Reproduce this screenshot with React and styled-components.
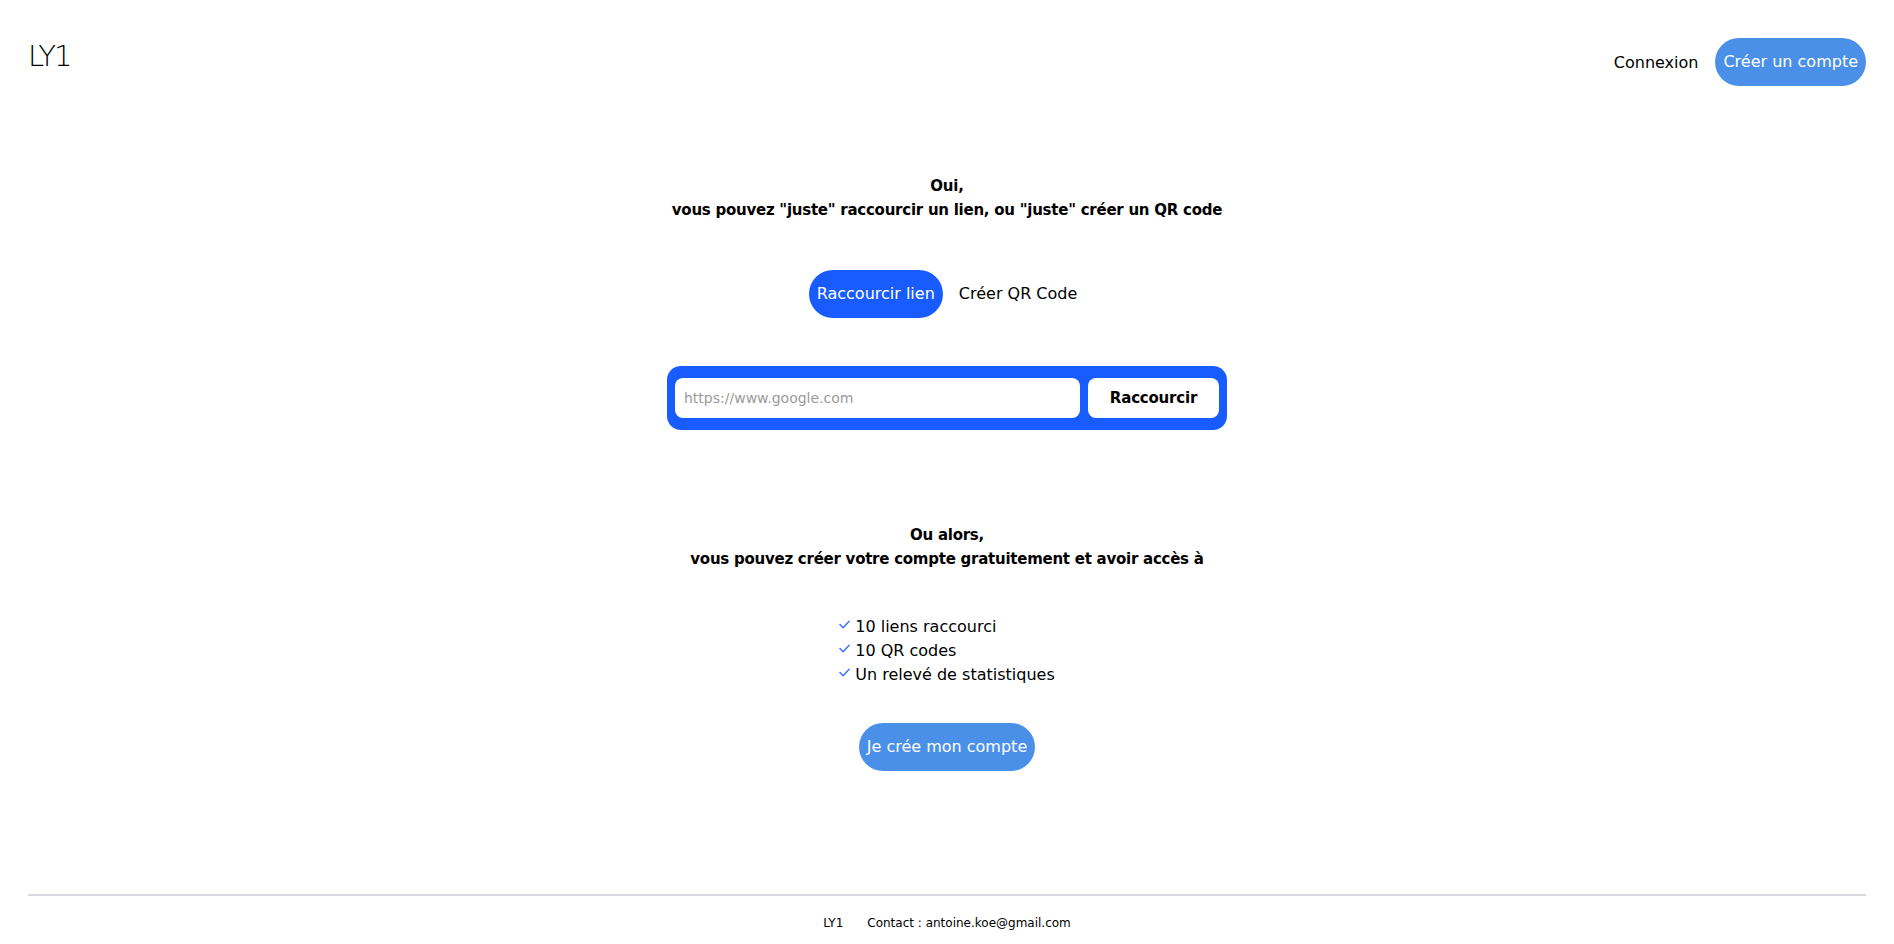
import React from "react";
import styled, { createGlobalStyle } from "styled-components";

const Global = createGlobalStyle`
  html, body { margin: 0; padding: 0; background: #fff; }
  body { font-family: "DejaVu Sans", "Noto Sans", sans-serif; color: #000; }
  * { box-sizing: border-box; }
`;

const Page = styled.div`
  min-height: 100vh;
  display: flex;
  flex-direction: column;
`;

const Header = styled.header`
  display: flex;
  justify-content: space-between;
  align-items: flex-start;
  padding: 38px 28px 0;
`;

const Logo = styled.div`
  font-size: 29px;
  font-weight: 300;
  line-height: 30px;
  margin-top: 3px;
  letter-spacing: -2px;
`;

const Nav = styled.nav`
  display: flex;
  align-items: center;
  gap: 17px;
`;

const NavLink = styled.a`
  font-size: 16px;
  color: #000;
  text-decoration: none;
`;

const PillButton = styled.button`
  border: none;
  border-radius: 999px;
  background: ${(p) => p.$bg || "#4a90e9"};
  color: #fff;
  font-family: inherit;
  font-size: 16px;
  line-height: 24px;
  padding: 12px ${(p) => p.$px || 8}px;
  cursor: pointer;
`;

const Main = styled.main`
  display: flex;
  flex-direction: column;
  align-items: center;
  padding-top: 88px;
`;

const Title = styled.h2`
  margin: 0;
  font-size: 15px;
  letter-spacing: -0.25px;
  line-height: 24px;
  font-weight: 700;
  text-align: center;
`;

const Tabs = styled.div`
  display: flex;
  gap: 8px;
  margin-top: 48px;
`;

const Tab = styled.button`
  border: none;
  border-radius: 999px;
  background: ${(p) => (p.$active ? "#185cff" : "transparent")};
  color: ${(p) => (p.$active ? "#fff" : "#000")};
  font-family: inherit;
  font-size: 16px;
  line-height: 24px;
  padding: 12px 8px;
  cursor: pointer;
`;

const Form = styled.form`
  display: flex;
  gap: 8px;
  width: 560px;
  margin-top: 48px;
  padding: 12px 8px;
  background: #185cff;
  border-radius: 14px;
`;

const Input = styled.input`
  flex: 1;
  height: 40px;
  border: none;
  border-radius: 8px;
  padding: 0 9px;
  font-family: inherit;
  font-size: 14px;
  outline: none;
  &::placeholder { color: #9a9a9a; }
`;

const SubmitButton = styled.button`
  width: 131px;
  height: 40px;
  border: none;
  border-radius: 8px;
  background: #fff;
  font-family: inherit;
  font-weight: 700;
  font-size: 15px;
  letter-spacing: -0.2px;
  color: #000;
`;

const Section = styled.section`
  display: flex;
  flex-direction: column;
  align-items: center;
  margin-top: 93px;
`;

const List = styled.ul`
  list-style: none;
  margin: 44px 0 0;
  padding: 0;
`;

const Item = styled.li`
  display: flex;
  align-items: center;
  gap: 5px;
  font-size: 16px;
  line-height: 24px;
`;

const Check = styled.svg`
  width: 11px;
  height: 11px;
  margin-top: -6px;
  flex: none;
`;

const CtaWrap = styled.div`
  margin-top: 36px;
`;

const Footer = styled.footer`
  margin: auto 28px 0;
  border-top: 2px solid #d6d8dd;
  padding: 19px 0 13px;
  display: flex;
  justify-content: center;
  gap: 24px;
  font-size: 12px;
  line-height: 16px;
  color: #000;
`;

const CheckIcon = () => (
  <Check viewBox="0 0 12 12" fill="none">
    <polyline points="1,6 4.5,9.5 11,2.5" stroke="#2f6bff" strokeWidth="1.4" strokeLinecap="round" strokeLinejoin="round" />
  </Check>
);

export default function App() {
  return (
    <Page>
      <Global />
      <Header>
        <Logo>LY1</Logo>
        <Nav>
          <NavLink href="#">Connexion</NavLink>
          <PillButton>Créer un compte</PillButton>
        </Nav>
      </Header>
      <Main>
        <Title>
          Oui,
          <br />
          vous pouvez "juste" raccourcir un lien, ou "juste" créer un QR code
        </Title>
        <Tabs>
          <Tab $active>Raccourcir lien</Tab>
          <Tab>Créer QR Code</Tab>
        </Tabs>
        <Form onSubmit={(e) => e.preventDefault()}>
          <Input placeholder="https://www.google.com" />
          <SubmitButton type="submit">Raccourcir</SubmitButton>
        </Form>
        <Section>
          <Title>
            Ou alors,
            <br />
            vous pouvez créer votre compte gratuitement et avoir accès à
          </Title>
          <List>
            <Item><CheckIcon />10 liens raccourci</Item>
            <Item><CheckIcon />10 QR codes</Item>
            <Item><CheckIcon />Un relevé de statistiques</Item>
          </List>
          <CtaWrap>
            <PillButton>Je crée mon compte</PillButton>
          </CtaWrap>
        </Section>
      </Main>
      <Footer>
        <span>LY1</span>
        <span>Contact : antoine.koe@gmail.com</span>
      </Footer>
    </Page>
  );
}
